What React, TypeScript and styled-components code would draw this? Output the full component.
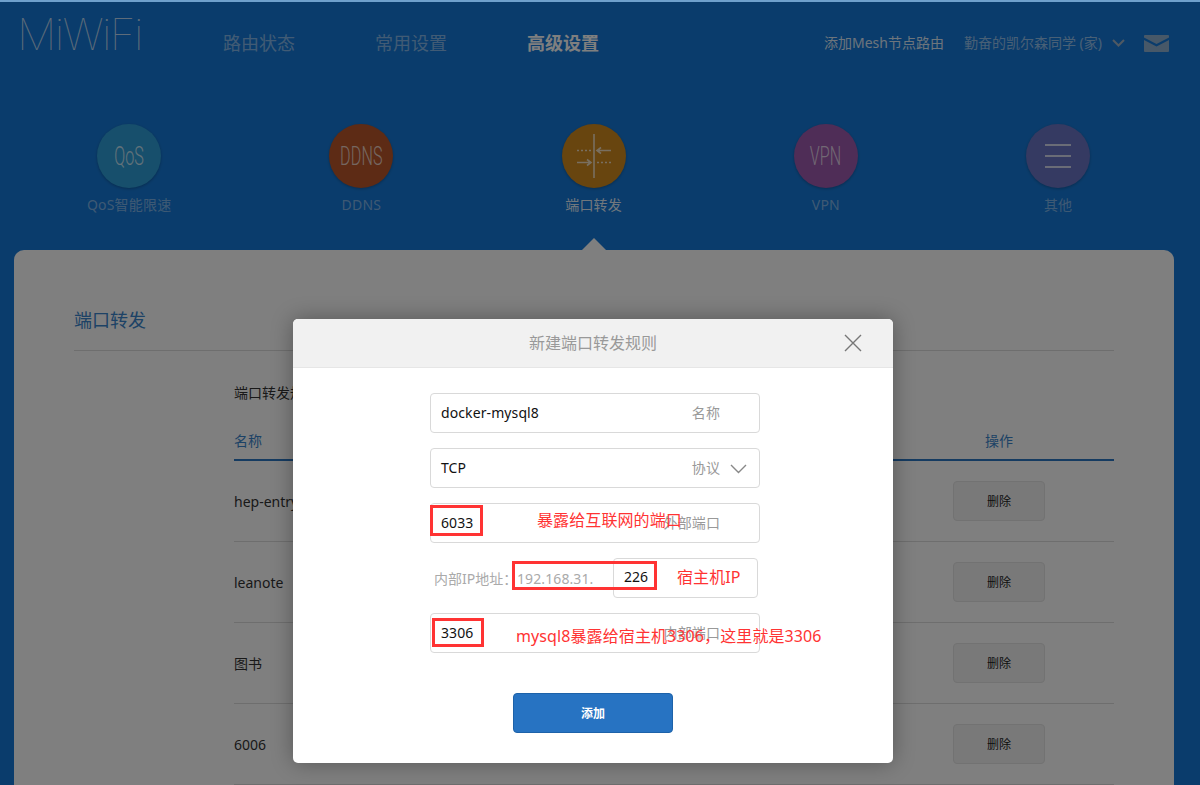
import React from "react";
import styled, { createGlobalStyle } from "styled-components";

const GlobalStyle = createGlobalStyle`
  html, body {
    margin: 0;
    padding: 0;
    height: 785px;
    overflow: hidden;
    background: #1579d8;
    font-family: "Noto Sans", "Noto Sans CJK SC", sans-serif;
  }
  * { box-sizing: border-box; }
`;

const Page = styled.div`
  position: relative;
  height: 785px;
  overflow: hidden;
  background: #1579d8;
`;

const WindowEdge = styled.div`
  height: 2px;
  background: #6fa0cc;
  position: relative;
  z-index: 3;
`;

const TopBar = styled.header`
  display: flex;
  align-items: flex-start;
  height: 122px;
  padding: 0 31px 0 17px;
`;

const Logo = styled.div`
  width: 98px;
  margin-top: 7px;
  font-family: "Inter", sans-serif;
  font-weight: 100;
  font-size: 44px;
  line-height: 50px;
  letter-spacing: -1.6px;
  color: rgba(255, 255, 255, 0.72);
  white-space: nowrap;
`;

const MainNav = styled.nav`
  display: flex;
  gap: 80px;
  margin-left: 108px;
  margin-top: 28px;
`;

const MainLink = styled.a<{ $active?: boolean }>`
  font-size: 18px;
  line-height: 26px;
  font-weight: ${(p) => (p.$active ? 700 : 400)};
  color: ${(p) => (p.$active ? "#fff" : "rgba(255,255,255,0.48)")};
  white-space: nowrap;
`;

const TopRight = styled.div`
  margin-left: auto;
  margin-top: 31px;
  display: flex;
  align-items: center;
  font-size: 14px;
  line-height: 20px;
  white-space: nowrap;
`;

const MeshLink = styled.span`
  color: rgba(255, 255, 255, 0.85);
`;

const RouterName = styled.span`
  margin-left: 20px;
  color: rgba(255, 255, 255, 0.55);
`;

const Chevron = styled.svg`
  display: block;
  margin-left: 10px;
`;

const MailIcon = styled.svg`
  display: block;
  margin-left: 19px;
`;

const FeatureRow = styled.div`
  display: grid;
  grid-template-columns: repeat(5, 232.25px);
  margin-left: 13px;
  height: 126px;
`;

const Feature = styled.div<{ $active?: boolean }>`
  display: flex;
  flex-direction: column;
  align-items: center;
  font-size: 14px;
  line-height: 20px;
  letter-spacing: 0.2px;
  color: ${(p) => (p.$active ? "rgba(255,255,255,0.9)" : "rgba(255,255,255,0.45)")};
`;

const Circle = styled.div<{ $color: string }>`
  width: 64px;
  height: 64px;
  border-radius: 50%;
  background: ${(p) => p.$color};
  box-shadow: 0 1px 3px rgba(0, 0, 0, 0.25);
  display: flex;
  align-items: center;
  justify-content: center;
  margin-bottom: 7px;
  color: rgba(255, 255, 255, 0.72);
`;

const CircleWord = styled.span`
  display: block;
  font-family: "Roboto", sans-serif;
  font-weight: 300;
  font-size: 26px;
  line-height: 30px;
  transform: scaleX(0.62);
`;

const Panel = styled.main`
  position: relative;
  margin: 0 26px 0 14px;
  height: 600px;
  background: #fff;
  border-radius: 10px 10px 0 0;
  padding: 52px 60px 0;
`;

const PanelNotch = styled.div`
  position: absolute;
  top: -12px;
  left: 568px;
  width: 0;
  height: 0;
  border-left: 12px solid transparent;
  border-right: 12px solid transparent;
  border-bottom: 12px solid #fff;
`;

const PanelTitle = styled.h1`
  margin: 0;
  height: 49px;
  font-size: 18px;
  line-height: 36px;
  font-weight: 400;
  color: #3a85cc;
  border-bottom: 1px solid #ddd;
`;

const TableWrap = styled.section`
  margin-left: 160px;
  padding-top: 30px;
`;

const TableCaption = styled.div`
  font-size: 14px;
  line-height: 24px;
  color: #333;
`;

const HeadRow = styled.div`
  display: grid;
  grid-template-columns: 1fr 230px;
  margin-top: 28px;
  height: 28px;
  border-bottom: 2px solid #2a77c2;
  font-size: 14px;
  line-height: 16px;
  color: #3a85cc;
`;

const BodyRow = styled.div`
  display: grid;
  grid-template-columns: 1fr 230px;
  align-items: center;
  height: 81px;
  border-bottom: 1px solid #ddd;
  font-size: 14px;
  color: #333;
`;

const ActionCell = styled.div`
  display: flex;
  justify-content: center;
  text-align: center;
`;

const DeleteButton = styled.button`
  width: 92px;
  height: 40px;
  background: #f2f2f2;
  border: 1px solid #e4e4e4;
  border-radius: 4px;
  font: inherit;
  font-size: 12px;
  color: #222;
  padding: 0;
`;

const Overlay = styled.div`
  position: absolute;
  inset: 0;
  background: rgba(0, 0, 0, 0.5);
  z-index: 1;
`;

const Modal = styled.div`
  position: absolute;
  left: 293px;
  top: 319px;
  width: 600px;
  height: 444px;
  background: #fff;
  border-radius: 5px;
  box-shadow: 0 0 22px rgba(0, 0, 0, 0.32);
  z-index: 2;
`;

const ModalHead = styled.div`
  height: 49px;
  background: #f1f1f1;
  border-bottom: 1px solid #e6e6e6;
  border-radius: 5px 5px 0 0;
  text-align: center;
  font-size: 16px;
  line-height: 48px;
  color: #999;
`;

const CloseIcon = styled.svg`
  position: absolute;
  top: 15px;
  right: 31px;
  display: block;
`;

const Form = styled.div`
  display: flex;
  flex-direction: column;
  gap: 15px;
  padding: 25px 0 0 137px;
`;

const Field = styled.div`
  display: flex;
  align-items: center;
  width: 330px;
  height: 40px;
  padding: 0 12px 2px 10px;
  border: 1px solid #d9d9d9;
  border-radius: 4px;
  font-size: 14px;
  letter-spacing: 0.1px;
  color: #111;
`;

const FieldLabel = styled.span<{ $pad?: number }>`
  margin-left: auto;
  margin-right: ${(p) => p.$pad ?? 27}px;
  color: #999;
`;

const FieldArrow = styled.svg`
  display: block;
  margin: 4px 0 0 10px;
`;

const IpRow = styled.div`
  display: flex;
  align-items: center;
  height: 40px;
  padding-left: 4px;
  font-size: 14px;
  color: #aaa;
`;

const IpLabel = styled.span`
  width: 83px;
  white-space: nowrap;
`;

const IpPrefix = styled.span`
  width: 96px;
  font-size: 14px;
  letter-spacing: 0.1px;
`;

const IpInput = styled.div`
  width: 145px;
  height: 40px;
  padding-left: 10px;
  border: 1px solid #d9d9d9;
  border-radius: 4px;
  font-size: 14px;
  line-height: 36px;
  color: #111;
`;

const AddButton = styled.button`
  display: block;
  width: 160px;
  height: 40px;
  margin: 40px 0 0 220px;
  background: #2773c2;
  border: 1px solid #1d62a9;
  border-radius: 4px;
  font: inherit;
  font-size: 12px;
  font-weight: 700;
  color: #fff;
  padding: 0;
`;

const RedBox = styled.div<{ $x: number; $y: number; $w: number; $h: number }>`
  position: absolute;
  left: ${(p) => p.$x}px;
  top: ${(p) => p.$y}px;
  width: ${(p) => p.$w}px;
  height: ${(p) => p.$h}px;
  border: 3px solid #ff3333;
`;

const RedNote = styled.div<{ $x: number; $y: number }>`
  position: absolute;
  left: ${(p) => p.$x}px;
  top: ${(p) => p.$y}px;
  font-size: 16px;
  line-height: 22px;
  letter-spacing: 0.1px;
  color: #ff3333;
  white-space: nowrap;
`;

const features = [
  { word: "QoS", label: "QoS智能限速", color: "#2f9fd8" },
  { word: "DDNS", label: "DDNS", color: "#ba562a" },
  { word: "port", label: "端口转发", color: "#d08a1e", active: true },
  { word: "VPN", label: "VPN", color: "#9e5aae" },
  { word: "more", label: "其他", color: "#6a74c4" },
];

const rules = ["hep-entry", "leanote", "图书", "6006"];

const PortIcon = () => (
  <svg width="40" height="44" viewBox="0 0 40 44" fill="none" stroke="currentColor" strokeWidth="1.6">
    <path d="M20 0V44" />
    <path d="M3 16.5H17" strokeDasharray="2 2" />
    <path d="M23 28.5H37" strokeDasharray="2 2" />
    <path d="M23 16.5H37M27 13.5L23 16.5L27 19.5" />
    <path d="M3 28.5H17M13 25.5L17 28.5L13 31.5" />
  </svg>
);

const MenuIcon = () => (
  <svg width="26" height="24" viewBox="0 0 26 24" fill="none" stroke="currentColor" strokeWidth="2">
    <path d="M0 1H26M0 12H26M0 23H26" />
  </svg>
);

export default function App() {
  return (
    <Page>
      <GlobalStyle />
      <WindowEdge />
      <TopBar>
        <Logo>MiWiFi</Logo>
        <MainNav>
          <MainLink>路由状态</MainLink>
          <MainLink>常用设置</MainLink>
          <MainLink $active>高级设置</MainLink>
        </MainNav>
        <TopRight>
          <MeshLink>添加Mesh节点路由</MeshLink>
          <RouterName>勤奋的凯尔森同学 (家)</RouterName>
          <Chevron width="13" height="8" viewBox="0 0 13 8" fill="none" stroke="#9fb3c6" strokeWidth="2">
            <path d="M1 1L6.5 6.5L12 1" />
          </Chevron>
          <MailIcon width="25" height="17" viewBox="0 0 25 17">
            <path d="M1 0H24a1 1 0 0 1 1 1V2.5L12.5 9L0 2.5V1a1 1 0 0 1 1-1Z" fill="#8fb0d0" />
            <path d="M0 5L12.5 11.5L25 5V16a1 1 0 0 1-1 1H1a1 1 0 0 1-1-1Z" fill="#8fb0d0" />
          </MailIcon>
        </TopRight>
      </TopBar>
      <FeatureRow>
        {features.map((f) => (
          <Feature key={f.label} $active={f.active}>
            <Circle $color={f.color}>
              {f.word === "port" && <PortIcon />}
              {f.word === "more" && <MenuIcon />}
              {f.word !== "port" && f.word !== "more" && <CircleWord>{f.word}</CircleWord>}
            </Circle>
            {f.label}
          </Feature>
        ))}
      </FeatureRow>
      <Panel>
        <PanelNotch />
        <PanelTitle>端口转发</PanelTitle>
        <TableWrap>
          <TableCaption>端口转发规则</TableCaption>
          <HeadRow>
            <div>名称</div>
            <ActionCell>操作</ActionCell>
          </HeadRow>
          {rules.map((name) => (
            <BodyRow key={name}>
              <div>{name}</div>
              <ActionCell>
                <DeleteButton>删除</DeleteButton>
              </ActionCell>
            </BodyRow>
          ))}
        </TableWrap>
      </Panel>
      <Overlay />
      <Modal>
        <ModalHead>新建端口转发规则</ModalHead>
        <CloseIcon width="18" height="18" viewBox="0 0 18 18" fill="none" stroke="#777" strokeWidth="1.4">
          <path d="M1 1L17 17M17 1L1 17" />
        </CloseIcon>
        <Form>
          <Field>
            docker-mysql8
            <FieldLabel>名称</FieldLabel>
          </Field>
          <Field>
            TCP
            <FieldLabel $pad={0}>协议</FieldLabel>
            <FieldArrow width="17" height="10" viewBox="0 0 17 10" fill="none" stroke="#888" strokeWidth="1.4">
              <path d="M1 1L8.5 8.5L16 1" />
            </FieldArrow>
          </Field>
          <Field>
            6033
            <FieldLabel>外部端口</FieldLabel>
          </Field>
          <IpRow>
            <IpLabel>内部IP地址：</IpLabel>
            <IpPrefix>192.168.31.</IpPrefix>
            <IpInput>226</IpInput>
          </IpRow>
          <Field>
            3306
            <FieldLabel>内部端口</FieldLabel>
          </Field>
        </Form>
        <AddButton>添加</AddButton>
        <RedBox $x={137} $y={186} $w={53} $h={31} />
        <RedNote $x={244} $y={190}>暴露给互联网的端口</RedNote>
        <RedBox $x={219} $y={242} $w={145} $h={29} />
        <RedNote $x={384} $y={247}>宿主机IP</RedNote>
        <RedBox $x={139} $y={299} $w={52} $h={29} />
        <RedNote $x={223} $y={306}>mysql8暴露给宿主机3306，这里就是3306</RedNote>
      </Modal>
    </Page>
  );
}
